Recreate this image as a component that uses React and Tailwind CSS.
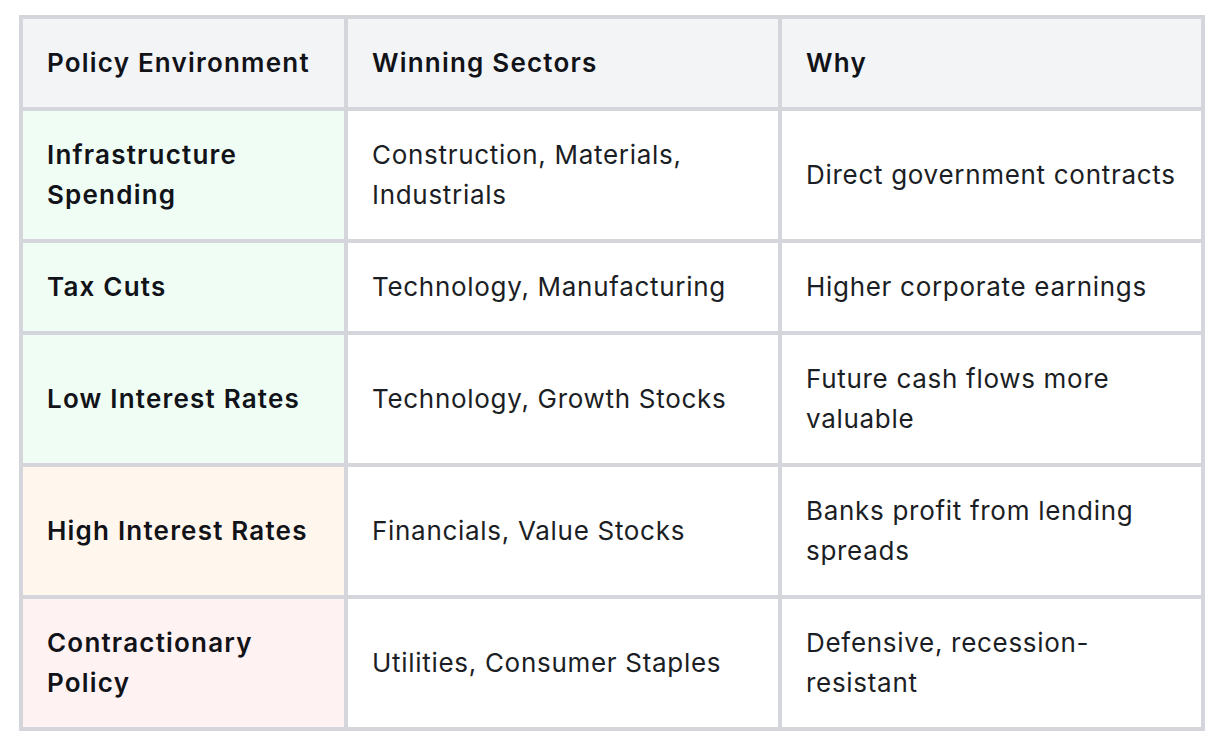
const rows = [
  {
    policy: "Infrastructure Spending",
    sectors: "Construction, Materials, Industrials",
    why: "Direct government contracts",
    tint: "bg-[#effdf4]",
  },
  {
    policy: "Tax Cuts",
    sectors: "Technology, Manufacturing",
    why: "Higher corporate earnings",
    tint: "bg-[#effdf4]",
  },
  {
    policy: "Low Interest Rates",
    sectors: "Technology, Growth Stocks",
    why: "Future cash flows more valuable",
    tint: "bg-[#effdf4]",
  },
  {
    policy: "High Interest Rates",
    sectors: "Financials, Value Stocks",
    why: "Banks profit from lending spreads",
    tint: "bg-[#fff7ee]",
  },
  {
    policy: "Contractionary Policy",
    sectors: "Utilities, Consumer Staples",
    why: "Defensive, recession-resistant",
    tint: "bg-[#fef2f2]",
  },
];

export default function App() {
  return (
    <main className="min-h-screen bg-white pl-[19px] pt-[15px] font-['Inter',sans-serif] text-[26px] leading-[40px] text-[#111318]">
      <div className="grid w-[1186px] grid-cols-[321px_430px_419px] gap-[4px] bg-[#d4d6dc] p-[4px]">
        <div className="bg-[#f3f4f6] px-6 py-6 font-semibold tracking-[1.2px]">Policy Environment</div>
        <div className="bg-[#f3f4f6] px-6 py-6 font-semibold tracking-[1.2px]">Winning Sectors</div>
        <div className="bg-[#f3f4f6] px-6 py-6 font-semibold tracking-[1.2px]">Why</div>

        {rows.map((row) => (
          <div key={row.policy} className="contents">
            <div className={`${row.tint} flex items-center px-6 py-6 font-semibold tracking-[1.2px]`}>
              {row.policy}
            </div>
            <div className="flex items-center bg-white px-6 py-6 tracking-[0.7px] text-[#1b1e24]">
              {row.sectors}
            </div>
            <div className="flex items-center bg-white px-6 py-6 tracking-[0.7px] text-[#1b1e24]">
              {row.why}
            </div>
          </div>
        ))}
      </div>
    </main>
  );
}
